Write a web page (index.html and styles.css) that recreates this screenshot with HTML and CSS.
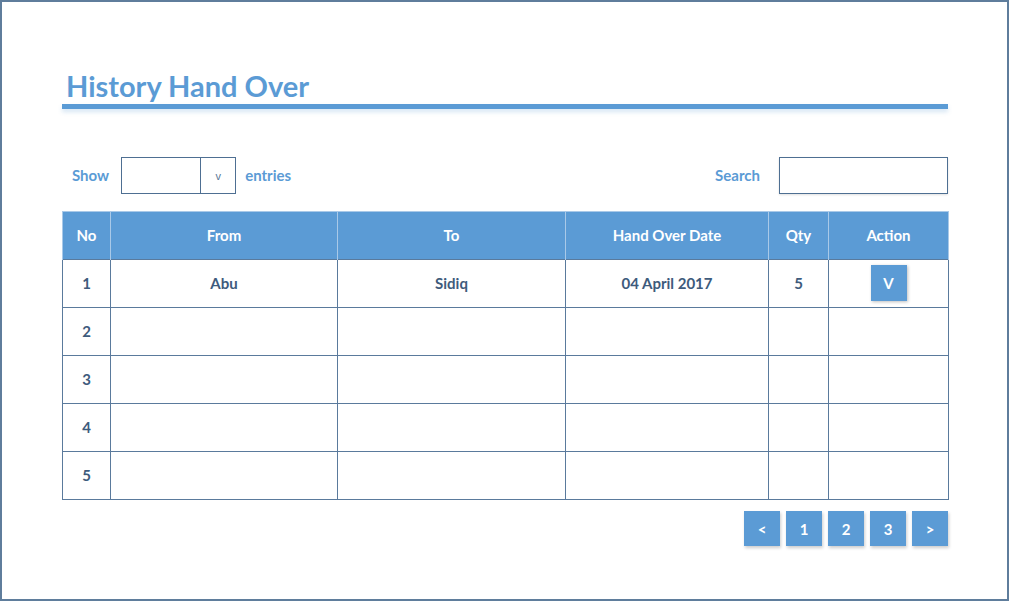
FILE: index.html
```html
<!DOCTYPE html>
<html>
<head>
<meta charset="utf-8">
<link rel="stylesheet" href="styles.css">
</head>
<body>
<div class="frame">
  <div class="content">
    <h1 class="title">History Hand Over</h1>
    <div class="rule"></div>
    <div class="controls">
      <div class="show">
        <span class="label">Show</span>
        <div class="select"><div class="select-value"></div><div class="select-arrow">v</div></div>
        <span class="label">entries</span>
      </div>
      <div class="search">
        <span class="label">Search</span>
        <div class="search-input"></div>
      </div>
    </div>
    <table class="grid">
      <thead>
        <tr>
          <th class="c-no">No</th>
          <th class="c-from">From</th>
          <th class="c-to">To</th>
          <th class="c-date">Hand Over Date</th>
          <th class="c-qty">Qty</th>
          <th class="c-act">Action</th>
        </tr>
      </thead>
      <tbody>
        <tr><td>1</td><td>Abu</td><td>Sidiq</td><td>04 April 2017</td><td>5</td><td><span class="vbtn">V</span></td></tr>
        <tr><td>2</td><td></td><td></td><td></td><td></td><td></td></tr>
        <tr><td>3</td><td></td><td></td><td></td><td></td><td></td></tr>
        <tr><td>4</td><td></td><td></td><td></td><td></td><td></td></tr>
        <tr><td>5</td><td></td><td></td><td></td><td></td><td></td></tr>
      </tbody>
    </table>
    <div class="pager">
      <span class="pbtn">&lt;</span>
      <span class="pbtn">1</span>
      <span class="pbtn">2</span>
      <span class="pbtn">3</span>
      <span class="pbtn">&gt;</span>
    </div>
  </div>
</div>
</body>
</html>
```
FILE: styles.css
```css
html, body {
  margin: 0;
  padding: 0;
  background: #ffffff;
}
body {
  font-family: Lato, "Open Sans", "Liberation Sans", sans-serif;
}
.frame {
  box-sizing: border-box;
  width: 1009px;
  height: 601px;
  border: 2px solid #5f7d9c;
  background: #ffffff;
}
.content {
  padding: 68px 60px 0 60px;
  display: flex;
  flex-direction: column;
}
.title {
  margin: 0 0 0 4px;
  font-size: 29px;
  line-height: 32px;
  font-weight: 700;
  color: #5b9bd5;
}
.rule {
  margin-top: 2px;
  width: 886px;
  height: 5px;
  background: #5b9bd5;
  box-shadow: 0 3px 4px rgba(91, 155, 213, 0.25);
}
.controls {
  margin-top: 48px;
  width: 886px;
  display: flex;
  justify-content: space-between;
  align-items: center;
}
.show, .search {
  display: flex;
  align-items: center;
}
.label {
  font-size: 15px;
  line-height: 18px;
  padding-bottom: 2px;
  font-weight: 700;
  color: #5b9bd5;
}
.show .label:first-child {
  margin-left: 10px;
  margin-right: 12px;
}
.show .label:last-child {
  margin-left: 9px;
}
.select {
  display: flex;
  width: 115px;
  height: 37px;
  box-sizing: border-box;
  border: 1px solid #4e6f92;
}
.select-value {
  width: 78px;
  border-right: 1px solid #4e6f92;
}
.select-arrow {
  flex: 1;
  display: flex;
  align-items: center;
  justify-content: center;
  font-size: 11px;
  color: #5b7896;
  font-family: "Liberation Sans", sans-serif;
}
.search .label {
  margin-right: 19px;
}
.search-input {
  width: 169px;
  height: 37px;
  box-sizing: border-box;
  border: 1px solid #4e6f92;
  box-shadow: 0 1px 2px rgba(0, 0, 0, 0.12);
}
.grid {
  margin-top: 17px;
  width: 886px;
  border-collapse: collapse;
  table-layout: fixed;
}
.grid th, .grid td {
  height: 48px;
  padding: 0 0 2px 0;
  text-align: center;
  font-size: 15px;
  font-weight: 700;
  box-sizing: border-box;
}
.grid th {
  background: #5b9bd5;
  color: #ffffff;
  border-left: 1px solid #a9c9e8;
  border-right: 1px solid #a9c9e8;
  border-top: 1px solid #a9c9e8;
}
.grid td {
  color: #3e5b7c;
  border: 1px solid #5a7a9c;
}
.c-no { width: 48px; }
.c-from { width: 227px; }
.c-to { width: 228px; }
.c-date { width: 203px; }
.c-qty { width: 60px; }
.c-act { width: 120px; }
.vbtn {
  display: inline-flex;
  align-items: center;
  justify-content: center;
  width: 36px;
  height: 36px;
  background: #5b9bd5;
  color: #ffffff;
  font-size: 15px;
  box-shadow: 1px 1px 3px rgba(0, 0, 0, 0.25);
}
.pager {
  margin-top: 11px;
  display: flex;
  justify-content: flex-end;
  gap: 6px;
  width: 886px;
}
.pbtn {
  display: inline-flex;
  align-items: center;
  justify-content: center;
  width: 36px;
  height: 35px;
  background: #5b9bd5;
  color: #ffffff;
  font-size: 15px;
  font-weight: 700;
  box-shadow: 1px 2px 3px rgba(0, 0, 0, 0.2);
}
```
